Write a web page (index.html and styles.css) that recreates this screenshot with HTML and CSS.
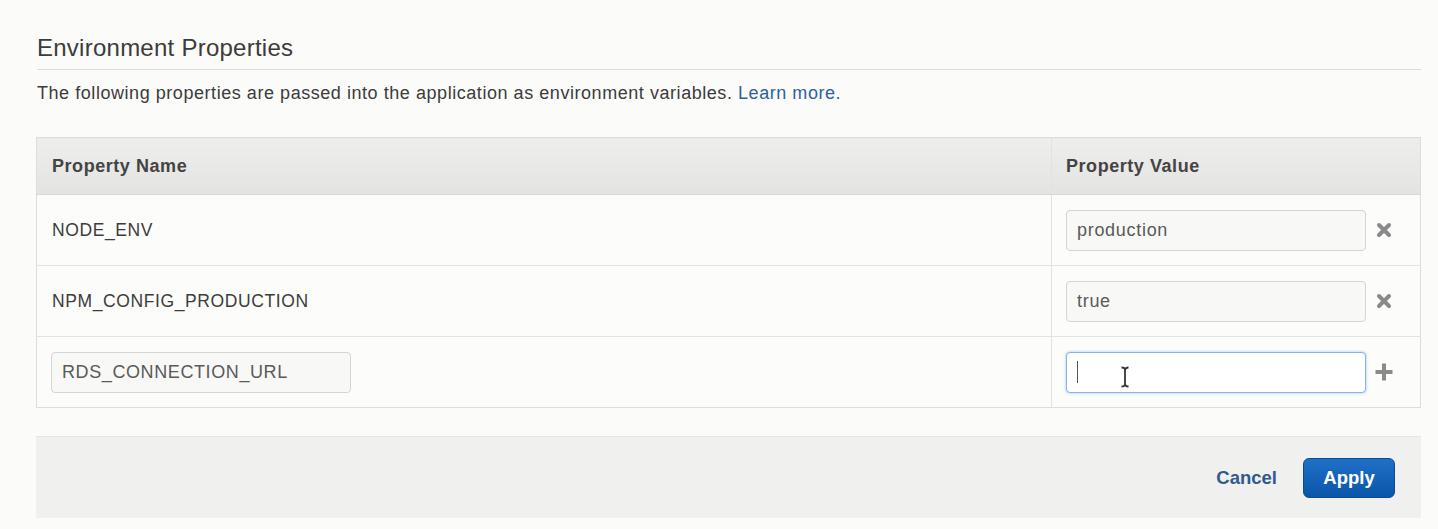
FILE: index.html
```html
<!DOCTYPE html>
<html>
<head>
<meta charset="utf-8">
<link rel="stylesheet" href="styles.css">
</head>
<body>
<div class="page">
  <h2 class="title">Environment Properties</h2>
  <p class="desc">The following properties are passed into the application as environment variables. <a href="#" class="link">Learn more.</a></p>
  <table class="props">
    <thead>
      <tr><th class="c-name">Property Name</th><th class="c-val">Property Value</th></tr>
    </thead>
    <tbody>
      <tr>
        <td class="c-name">NODE_ENV</td>
        <td class="c-val"><div class="valcell"><div class="inp">production</div><span class="icon"><svg width="18" height="18" viewBox="0 0 18 18"><path d="M4 4 L14 14 M14 4 L4 14" stroke="#8a8a8a" stroke-width="4" stroke-linecap="round"/></svg></span></div></td>
      </tr>
      <tr>
        <td class="c-name">NPM_CONFIG_PRODUCTION</td>
        <td class="c-val"><div class="valcell"><div class="inp">true</div><span class="icon"><svg width="18" height="18" viewBox="0 0 18 18"><path d="M4 4 L14 14 M14 4 L4 14" stroke="#8a8a8a" stroke-width="4" stroke-linecap="round"/></svg></span></div></td>
      </tr>
      <tr>
        <td class="c-name"><div class="inp name-inp">RDS_CONNECTION_URL</div></td>
        <td class="c-val"><div class="valcell"><div class="inp focus"><span class="caret"></span><svg class="ibeam" width="10" height="22" viewBox="0 0 10 22"><path d="M1.5 1.5 Q5 1.5 5 4 Q5 1.5 8.5 1.5 M5 4 V18 M1.5 20.5 Q5 20.5 5 18 Q5 20.5 8.5 20.5" fill="none" stroke="#333" stroke-width="1.8"/></svg></div><span class="icon"><svg width="20" height="20" viewBox="0 0 20 20"><path d="M10 1.5 V18.5 M1.5 10 H18.5" stroke="#8a8a8a" stroke-width="4"/></svg></span></div></td>
      </tr>
    </tbody>
  </table>
  <div class="footer">
    <a href="#" class="cancel">Cancel</a>
    <button class="apply">Apply</button>
  </div>
</div>
</body>
</html>
```
FILE: styles.css
```css
html, body {
  margin: 0;
  padding: 0;
  background: #fbfbf9;
}
body {
  font-family: "Liberation Sans", Arial, sans-serif;
  color: #3a3a3a;
}
.page {
  margin: 0 17px 0 36px;
  padding-top: 34px;
}
.title {
  margin: 0 0 0 1px;
  font-size: 24px;
  line-height: 28px;
  font-weight: normal;
  letter-spacing: 0.25px;
  color: #3c3c3c;
  padding-bottom: 7px;
  border-bottom: 1px solid #dcdcda;
}
.desc {
  margin: 13px 0 0 1px;
  font-size: 18px;
  line-height: 20px;
  letter-spacing: 0.55px;
  color: #3c3c3c;
}
.link {
  color: #2f5f9f;
  text-decoration: none;
}
.props {
  margin-top: 34px;
  width: 100%;
  border-collapse: collapse;
  border: 1px solid #dddddb;
  background: #fcfcfa;
}
.props th {
  height: 56px;
  padding: 0 0 0 15px;
  text-align: left;
  font-size: 18px;
  font-weight: bold;
  letter-spacing: 0.55px;
  color: #444;
  background: linear-gradient(#eeeeec, #e3e3e1);
  border-bottom: 1px solid #d7d7d5;
}
.props td {
  height: 70px;
  padding: 0 0 0 15px;
  font-size: 17.5px;
  letter-spacing: 0.6px;
  color: #3c3c3c;
  border-top: 1px solid #e2e2e0;
}
.props th.c-val, .props td.c-val {
  width: 354px;
  padding-left: 14px;
  border-left: 1px solid #e2e2e0;
}
.valcell {
  display: flex;
  align-items: center;
  gap: 8px;
}
.inp {
  box-sizing: border-box;
  width: 300px;
  height: 41px;
  border: 1px solid #d4d4d2;
  border-radius: 4px;
  background: #f8f8f6;
  padding: 0 10px;
  display: flex;
  align-items: center;
  font-size: 18px;
  letter-spacing: 0.7px;
  color: #5a5a5a;
  position: relative;
}
.name-inp {
  margin-left: -1px;
  letter-spacing: 0.6px;
}
.inp.focus {
  background: #fff;
  border-color: #86b4e4;
  box-shadow: 0 0 3px rgba(90, 150, 220, 0.55);
}
.caret {
  display: block;
  width: 1px;
  height: 22px;
  background: #555;
}
.ibeam {
  position: absolute;
  left: 53px;
  top: 13px;
}
.icon {
  display: flex;
  align-items: center;
  justify-content: center;
  width: 20px;
  height: 20px;
}
.footer {
  margin-top: 28px;
  height: 81px;
  background: #f0f0ee;
  border-top: 1px solid #e6e6e4;
  display: flex;
  align-items: center;
  justify-content: flex-end;
  padding-right: 26px;
  gap: 26px;
}
.cancel {
  font-size: 18.5px;
  font-weight: bold;
  color: #2e5a8e;
  text-decoration: none;
}
.apply {
  width: 92px;
  height: 40px;
  border: 1px solid #0a4c94;
  border-radius: 6px;
  background: linear-gradient(#1f70c8, #0a55a8);
  color: #fff;
  font-family: "Liberation Sans", Arial, sans-serif;
  font-size: 18.5px;
  font-weight: bold;
  cursor: pointer;
}
```
